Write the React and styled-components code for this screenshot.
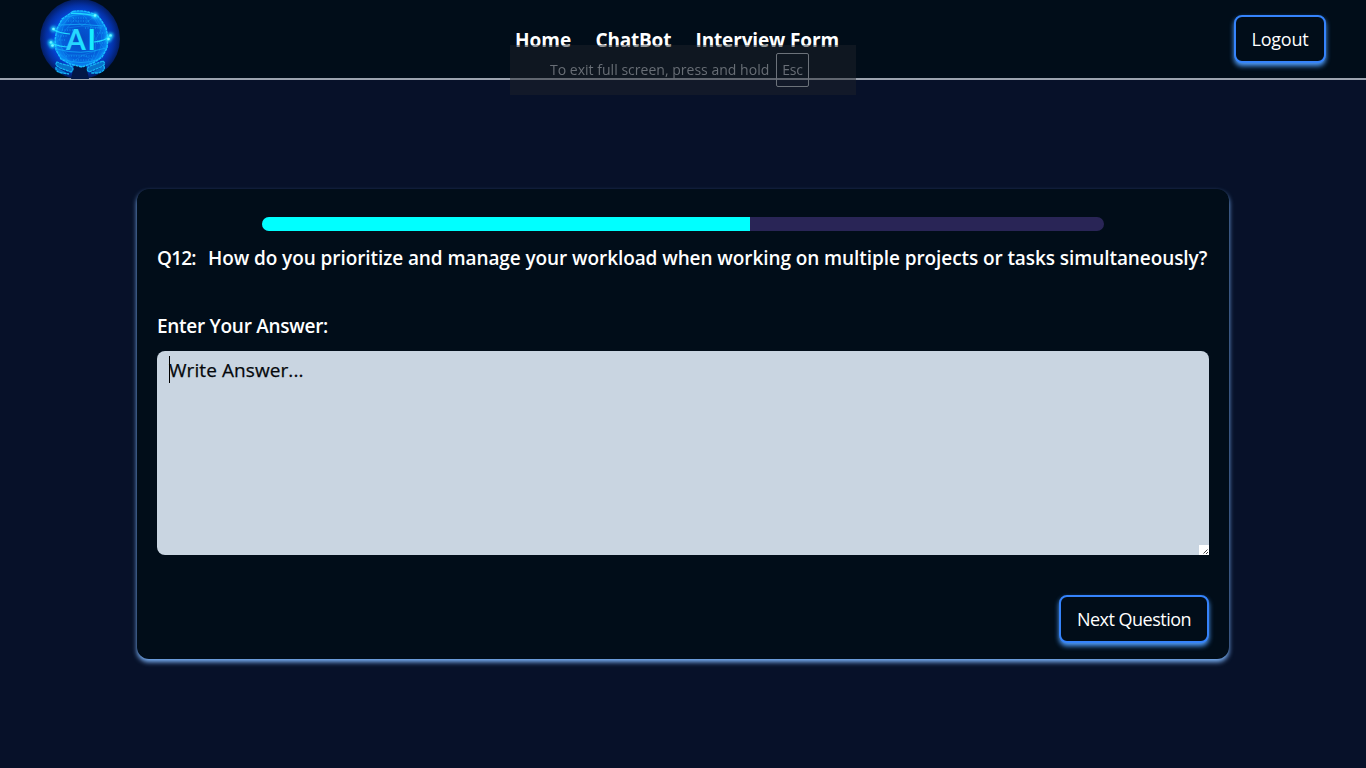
import React from "react";
import styled, { createGlobalStyle } from "styled-components";

const GlobalStyle = createGlobalStyle`
  * { box-sizing: border-box; }
  body {
    margin: 0;
    min-height: 768px;
    overflow: hidden;
    background: #071129;
    color: #fff;
    font-family: "Segoe UI", "Open Sans", "Noto Sans", sans-serif;
  }
`;

const Header = styled.header`
  height: 80px;
  padding: 0 40px;
  display: flex;
  align-items: center;
  justify-content: space-between;
  background: #010d19;
  border-bottom: 2px solid #9ca3af;
`;

const Logo = styled.svg`
  display: block;
  width: 80px;
  height: 80px;
`;

const Nav = styled.nav`
  display: flex;
  gap: 24px;
`;

const NavLink = styled.a`
  width: ${(p) => p.$width}px;
  font-size: 19px;
  font-weight: 700;
  line-height: 28px;
  letter-spacing: ${(p) => p.$track}px;
  white-space: nowrap;
  padding-top: 1px;
`;

const Button = styled.button`
  width: ${(p) => p.$width}px;
  height: 48px;
  padding: 0;
  border: 2px solid #3583fb;
  border-radius: 8px;
  background: #010d19;
  box-shadow: 0 3px 5px #4f9dfa;
  color: #fff;
  font: 400 18px/28px "Segoe UI", "Open Sans", "Noto Sans", sans-serif;
  letter-spacing: ${(p) => p.$track}px;
  white-space: nowrap;
`;

const Main = styled.main`
  padding-top: 109px;
  display: flex;
  justify-content: center;
`;

const Card = styled.section`
  width: 1092px;
  height: 470px;
  padding: 28px 20px 16px;
  display: flex;
  flex-direction: column;
  border-radius: 12px;
  background: #010d19;
  box-shadow: 0 3px 5px #7db5fb;
`;

const Progress = styled.div`
  width: 842px;
  height: 14px;
  align-self: center;
  overflow: hidden;
  border-radius: 7px;
  background: #292556;
`;

const ProgressFill = styled.div`
  height: 100%;
  background: #00ffff;
`;

const Question = styled.div`
  display: flex;
  margin-top: 13px;
  font-size: 19px;
  font-weight: 600;
  line-height: 28px;
  white-space: nowrap;
`;

const QuestionNumber = styled.span`
  width: 51px;
  letter-spacing: -0.8px;
`;

const QuestionText = styled.span`
  letter-spacing: -0.08px;
`;

const Label = styled.label`
  margin-top: 40px;
  font-size: 19px;
  font-weight: 600;
  line-height: 28px;
  letter-spacing: -0.28px;
`;

const AnswerBox = styled.div`
  position: relative;
  height: 204px;
  margin-top: 11px;
`;

const Answer = styled.textarea`
  display: block;
  width: 100%;
  height: 100%;
  padding: 5px 12px;
  border: 0;
  border-radius: 8px;
  outline: 0;
  resize: none;
  background: #c9d5e1;
  font: 500 19px/28px "Segoe UI", "Open Sans", "Noto Sans", sans-serif;
  letter-spacing: 0.08px;
  -webkit-text-stroke: 0.25px #05080c;
  &::placeholder { color: #05080c; opacity: 1; }
`;

const Caret = styled.span`
  position: absolute;
  left: 12px;
  top: 5px;
  width: 1px;
  height: 27px;
  background: #000;
`;

const Grip = styled.svg`
  position: absolute;
  right: 0;
  bottom: 0;
  width: 10px;
  height: 10px;
`;

const Actions = styled.div`
  display: flex;
  justify-content: flex-end;
  margin-top: 40px;
`;

const Toast = styled.div`
  position: fixed;
  left: 510px;
  top: 45px;
  width: 346px;
  height: 50px;
  padding-left: 40px;
  display: flex;
  align-items: center;
  background: rgba(32, 35, 42, 0.48);
  color: #686e76;
  font-size: 14px;
  white-space: nowrap;
`;

const ToastText = styled.span`
  width: 226px;
  padding-bottom: 2px;
  letter-spacing: 0.02px;
`;

const Key = styled.span`
  width: 33px;
  height: 34px;
  border: 1px solid #6c727a;
  border-radius: 2px;
  line-height: 32px;
  text-align: center;
  letter-spacing: -0.2px;
`;

const SPARKS = [[13.5, 30], [11, 43.5], [12.5, 46.5], [70.5, 36.5], [68.5, 40], [55, 16.5]];

function Brand() {
  return (
    <Logo viewBox="0 0 80 80">
      <defs>
        <radialGradient id="disc">
          <stop offset="0" stopColor="#0660e8" />
          <stop offset="0.65" stopColor="#0548dc" />
          <stop offset="0.85" stopColor="#0430a4" />
          <stop offset="1" stopColor="#031d62" />
        </radialGradient>
        <radialGradient id="globe">
          <stop offset="0" stopColor="#0348c4" />
          <stop offset="0.75" stopColor="#0560dc" />
          <stop offset="1" stopColor="#0a8cf6" />
        </radialGradient>
        <linearGradient id="letters" x1="0" x2="1">
          <stop offset="0" stopColor="#30c8ff" />
          <stop offset="1" stopColor="#12f4ff" />
        </linearGradient>
        <filter id="glow" x="-100%" y="-100%" width="300%" height="300%">
          <feGaussianBlur stdDeviation="1.5" />
        </filter>
      </defs>
      <circle cx="40" cy="40" r="40" fill="url(#disc)" />
      <path d="M31 80L34 66H46L49 80Z" fill="#031746" />
      <path d="M33 12.500Q40 11 48 13L57 16L61 21L66 29L68 39L67 49L62 58L53 64L42 68L30 65L21 60L16 51L15 41L17 30L22 20Z" fill="url(#globe)" stroke="#18c0ff" strokeWidth="1.400" strokeDasharray="3 .6" />
      <g fill="none" stroke="#13a9fa" strokeWidth="0.8">
        <path d="M19 26Q41 24 63 27M27 18Q41 13 55 18M17 50Q40 57 66 49M22 60Q41 67 60 60" />
        <path d="M31 15Q10 40 31 66M50 15Q73 38 51 66M40 13Q52 23 55 39T47 68M20 28L31 17L42 27L55 17L62 29L56 40L65 50M17 43L27 29L34 21M20 55L31 64L43 56L57 63L63 53M27 29L42 27L62 29M18 45L28 56L43 56L56 52" opacity=".4" />
        <path d="M18 37H28M19 41H26M22 31H35M45 29H61M57 44H65M26 57H55M28 22H50M33 19H47M57 34H66M19 47H26M33 61H49" strokeDasharray="1 1.5" />
      </g>
      <g fill="none" stroke="#20d9ff" strokeWidth="1.200">
        <path d="M14 31Q19 34 30 35M11 44Q20 48 29 48M54 43Q65 42 70 37" />
        <path d="M31 14.500Q45 14 55 17" />
      </g>
      <g fill="#0872cc" stroke="#14b5f2" strokeWidth="1.300" strokeDasharray="3 .6">
        <path d="M17 63Q14 66 20 69L31 73Q35 70 31 67L22 65ZM16 68Q15 73 22 74L29 75M63 62Q67 65 61 68L49 73Q45 70 50 67ZM64 67Q66 72 58 74L51 74" />
      </g>
      <g fill="#20dfff">
        {SPARKS.map(([x, y]) => (
          <g key={`${x}-${y}`}>
            <circle cx={x} cy={y} r="2.800" filter="url(#glow)" />
            <circle cx={x} cy={y} r="1.300" fill="#7af7ff" />
          </g>
        ))}
      </g>
      <text x="26 47.500" y="50.500" fill="url(#letters)" fontFamily="Lato, sans-serif" fontSize="28.500" fontWeight="700">AI</text>
    </Logo>
  );
}

export default function App() {
  return (
    <>
      <GlobalStyle />
      <Header>
        <Brand />
        <Nav>
          <NavLink $width={56.5} $track={0}>Home</NavLink>
          <NavLink $width={76} $track={-0.2}>ChatBot</NavLink>
          <NavLink $width={143.5} $track={-0.14}>Interview Form</NavLink>
        </Nav>
        <Button $width={92} $track={-0.2}>Logout</Button>
      </Header>
      <Main>
        <Card>
          <Progress>
            <ProgressFill style={{ width: `${(11 / 19) * 100 + 0.06}%` }} />
          </Progress>
          <Question>
            <QuestionNumber>Q12:</QuestionNumber>
            <QuestionText>
              How do you prioritize and manage your workload when working on multiple projects or tasks simultaneously?
            </QuestionText>
          </Question>
          <Label htmlFor="answer">Enter Your Answer:</Label>
          <AnswerBox>
            <Answer id="answer" placeholder="Write Answer..." />
            <Caret />
            <Grip viewBox="0 0 10 10">
              <rect width="10" height="10" fill="#fff" />
              <path d="M4.500 8.500L8.500 4.500M7 9L9 7" stroke="#444" />
            </Grip>
          </AnswerBox>
          <Actions>
            <Button $width={150} $track={-0.5}>Next Question</Button>
          </Actions>
        </Card>
      </Main>
      <Toast>
        <ToastText>To exit full screen, press and hold</ToastText>
        <Key>Esc</Key>
      </Toast>
    </>
  );
}
